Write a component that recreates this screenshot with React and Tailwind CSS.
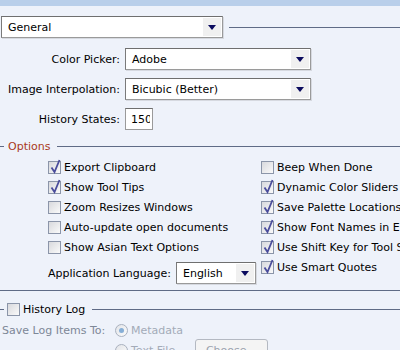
import React from "react";

const Arrow = () => (
  <svg width="8" height="5" viewBox="0 0 8 5">
    <polygon points="0,0 8,0 4,5" fill="#0b0b5e" />
  </svg>
);

const Select = ({ value, width }) => (
  <div
    className={`${width} h-[22px] flex items-center bg-white border border-[#9a9a9a] border-t-[#6f6f6f] border-l-[#7a7a7a] shadow-[1px_1px_0_#d6d9e0]`}
  >
    <span className="flex-1 pl-[6px] whitespace-nowrap overflow-hidden">{value}</span>
    <div className="w-[18px] h-[18px] mr-px bg-[#f0f0f0] flex items-center justify-center">
      <Arrow />
    </div>
  </div>
);

const Check = ({ checked }) => (
  <div className="relative w-[13px] h-[13px] shrink-0 border border-[#8b95a9] bg-gradient-to-br from-[#d8d9dd] to-[#fafafa]">
    {checked && (
      <svg className="absolute left-[1px] top-[-3px]" width="11" height="15" viewBox="0 0 11 15">
        <path d="M1.5 8.5 L4.5 13 L9.5 1" stroke="#4a4d9c" strokeWidth="1.8" fill="none" />
      </svg>
    )}
  </div>
);

const Row = ({ checked, label }) => (
  <div className="flex items-center h-[13px] whitespace-nowrap">
    <Check checked={checked} />
    <span className="ml-[3px]">{label}</span>
  </div>
);

const Radio = ({ checked }) => (
  <div className="w-[13px] h-[13px] shrink-0 rounded-full border border-[#a9b1bf] bg-gradient-to-br from-[#e2e4e8] to-[#fbfbfb] flex items-center justify-center">
    {checked && <div className="w-[5px] h-[5px] rounded-full bg-[#86aed6]" />}
  </div>
);

const Line = () => <div className="flex-1 h-px bg-[#5f6b86]" />;

export default function App() {
  return (
    <div
      className="w-[400px] h-[350px] overflow-hidden bg-[#eef2fa] text-[11px] text-black leading-none"
      style={{ fontFamily: '"DejaVu Sans", Verdana, sans-serif' }}
    >
      <div className="h-[6px] bg-[#b9cfea]" />

      <div className="mt-[10px] flex items-center">
        <div className="ml-px">
          <Select value="General" width="w-[222px]" />
        </div>
        <div className="ml-[6px] flex-1 flex">
          <Line />
        </div>
      </div>

      <div className="mt-[10px] flex flex-col gap-[8px]">
        <div className="flex items-center">
          <span className="w-[125px] pr-[5px] text-right">Color Picker:</span>
          <Select value="Adobe" width="w-[186px]" />
        </div>
        <div className="flex items-center">
          <span className="w-[125px] pr-[5px] text-right whitespace-nowrap">Image Interpolation:</span>
          <Select value="Bicubic (Better)" width="w-[186px]" />
        </div>
        <div className="flex items-center">
          <span className="w-[125px] pr-[5px] text-right">History States:</span>
          <div className="w-[28px] h-[22px] bg-white border border-[#9a9a9a] border-t-[#6f6f6f] flex items-center pl-[5px]">
            <span className="w-[19px] overflow-hidden whitespace-nowrap">150</span>
          </div>
        </div>
      </div>

      <div className="mt-[9px] h-[14px] flex items-center">
        <div className="w-[4px] h-px bg-[#5f6b86]" />
        <span className="ml-[4px] text-[#a9391a]">Options</span>
        <div className="ml-[7px] flex-1 flex">
          <Line />
        </div>
      </div>

      <div className="mt-[8px] flex">
        <div className="w-[261px] pl-[48px] flex flex-col">
          <div className="flex flex-col gap-[7px]">
            <Row checked label="Export Clipboard" />
            <Row checked label="Show Tool Tips" />
            <Row label="Zoom Resizes Windows" />
            <Row label="Auto-update open documents" />
            <Row label="Show Asian Text Options" />
          </div>
          <div className="mt-[8px] flex items-center whitespace-nowrap">
            <span>Application Language:</span>
            <div className="ml-[5px]">
              <Select value="English" width="w-[80px]" />
            </div>
          </div>
        </div>
        <div className="flex-1 flex flex-col gap-[7px] overflow-hidden">
          <Row label="Beep When Done" />
          <Row checked label="Dynamic Color Sliders" />
          <Row checked label="Save Palette Locations" />
          <Row checked label="Show Font Names in English" />
          <Row checked label="Use Shift Key for Tool Switch" />
          <Row checked label="Use Smart Quotes" />
        </div>
      </div>

      <div className="mt-[6px] h-px bg-[#5f6b86]" />

      <div className="mt-[12px] h-[13px] flex items-center">
        <div className="w-[4px] h-px bg-[#5f6b86]" />
        <div className="ml-[3px]">
          <Check />
        </div>
        <span className="ml-[3px]">History Log</span>
        <div className="ml-[7px] flex-1 flex">
          <Line />
        </div>
      </div>

      <div className="mt-[8px] h-[13px] flex items-center text-[#7d8797]">
        <span className="w-[115px] pl-[2px] whitespace-nowrap">Save Log Items To:</span>
        <Radio checked />
        <span className="ml-[3px] text-[#a3abb8]">Metadata</span>
      </div>

      <div className="mt-[2px] h-[22px] flex items-center pl-[115px]">
        <Radio />
        <span className="ml-[3px] w-[64px] text-[#a3abb8] whitespace-nowrap">Text File</span>
        <div className="w-[73px] h-[22px] rounded-[3px] border border-[#b4b9c2] bg-[#f4f4f4] flex items-center justify-center text-[#9aa2ae]">
          Choose...
        </div>
      </div>
    </div>
  );
}
